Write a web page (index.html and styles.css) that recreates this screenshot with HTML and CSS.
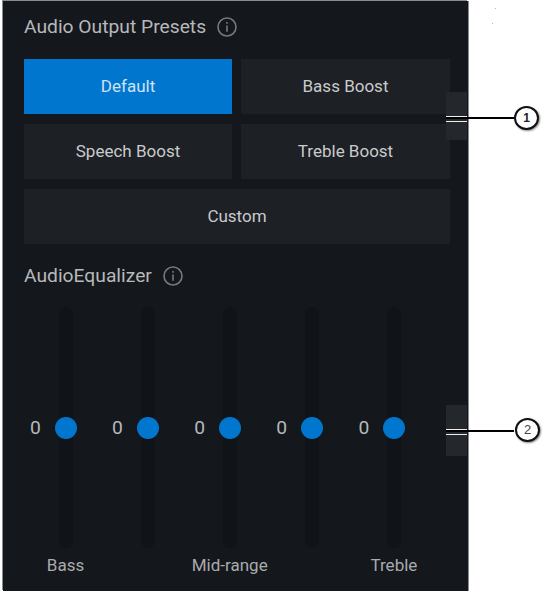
FILE: index.html
```html
<!DOCTYPE html>
<html lang="en">
<head>
<meta charset="utf-8">
<title>Audio</title>
<link rel="stylesheet" href="styles.css">
</head>
<body>
<main class="panel">
  <section class="section">
    <h2 class="heading">Audio Output Presets
      <svg class="info" viewBox="0 0 20 20" aria-hidden="true"><circle cx="10" cy="10" r="9"/><path d="M10 8.4v6.4"/><path d="M10 5v1.8"/></svg>
    </h2>
    <div class="presets">
      <button class="preset active">Default</button>
      <button class="preset">Bass Boost</button>
      <button class="preset">Speech Boost</button>
      <button class="preset">Treble Boost</button>
      <button class="preset wide">Custom</button>
    </div>
  </section>
  <section class="eq-section">
    <h2 class="heading">AudioEqualizer
      <svg class="info" viewBox="0 0 20 20" aria-hidden="true"><circle cx="10" cy="10" r="9"/><path d="M10 8.4v6.4"/><path d="M10 5v1.8"/></svg>
    </h2>
    <div class="bands">
      <div class="band"><span class="value">0</span><div class="track"><span class="thumb"></span></div><span class="label">Bass</span></div>
      <div class="band"><span class="value">0</span><div class="track"><span class="thumb"></span></div><span class="label"></span></div>
      <div class="band"><span class="value">0</span><div class="track"><span class="thumb"></span></div><span class="label">Mid-range</span></div>
      <div class="band"><span class="value">0</span><div class="track"><span class="thumb"></span></div><span class="label"></span></div>
      <div class="band"><span class="value">0</span><div class="track"><span class="thumb"></span></div><span class="label">Treble</span></div>
    </div>
  </section>
</main>

<div class="tab tab-one"></div>
<div class="tab tab-two"></div>
<div class="leader leader-one"></div>
<div class="leader leader-two"></div>
<div class="callout callout-one">1</div>
<div class="callout callout-two">2</div>
<span class="speck speck-one"></span>
<span class="speck speck-two"></span>
</body>
</html>
```
FILE: styles.css
```css
* { box-sizing: border-box; }
html, body { margin: 0; height: 100%; background: #fff; overflow: hidden; }
body { position: relative; font-family: Roboto, "Liberation Sans", sans-serif; }

.panel {
  width: 465px;
  height: 590px;
  margin: 1px 0 0 3px;
  padding: 13px 17px 0 21px;
  background: #14171c;
  box-shadow: -1px -1px 0 #8c8c8c, 1px 0 0 #8c8c8c;
}
.heading {
  display: flex;
  align-items: center;
  gap: 11px;
  height: 24px;
  margin: 0;
  font-size: 19.25px;
  font-weight: 400;
  color: #b7b9bb;
}
.info { width: 20px; height: 20px; margin-top: 1px; fill: none; stroke: #77797c; stroke-width: 1.6; }

.presets {
  display: grid;
  grid-template-columns: 208px 209px;
  grid-auto-rows: 55px;
  gap: 10px 9px;
  margin-top: 21px;
}
.preset {
  border: 0;
  padding: 0 0 2px;
  background: #1d2025;
  color: #c9cbcc;
  font: 400 17px Roboto, "Liberation Sans", sans-serif;
}
.preset.active { background: #0076ce; color: #cfe2f3; }
.preset.wide { grid-column: 1 / -1; }

.eq-section { margin-top: 19px; }
.bands {
  display: grid;
  grid-template-columns: repeat(5, 82.1px);
  margin-top: 20px;
}
.band {
  display: grid;
  grid-template-columns: 34.5px 14px 33.6px;
  grid-template-rows: 241px auto;
  align-items: center;
}
.value {
  grid-column: 1;
  grid-row: 1;
  padding-left: 6px;
  font-size: 19.25px;
  color: #b7b9bb;
}
.track {
  grid-column: 2;
  grid-row: 1;
  position: relative;
  height: 241px;
  border-radius: 7px;
  background: #101318;
}
.thumb {
  position: absolute;
  left: -4px;
  top: 110px;
  width: 22px;
  height: 22px;
  border-radius: 50%;
  background: #0076ce;
}
.label {
  grid-column: 1 / -1;
  grid-row: 2;
  justify-self: center;
  margin: 7px 0 0 1px;
  white-space: nowrap;
  font-size: 17px;
  color: #a9abad;
}

.tab { position: absolute; left: 446px; width: 21px; background: #24272c; }
.tab-one { top: 92px; height: 48px; }
.tab-two { top: 405px; height: 51px; }
.leader { position: absolute; left: 446px; width: 68px; height: 2px; background: #000; }
.leader::before {
  content: "";
  position: absolute;
  left: 0;
  top: -1px;
  width: 21px;
  height: 4px;
  border-top: 1px solid #eee;
  border-bottom: 1px solid #eee;
}
.leader-one { top: 117px; }
.leader-two { top: 430px; }
.callout {
  position: absolute;
  width: 25px;
  border: 2px solid #111;
  border-radius: 50%;
  background: #fff;
  box-shadow: 1px 1px 2px #888;
  text-align: center;
}
.callout-one { left: 514px; top: 106px; height: 24px; color: #222; font: 700 12px/20px "Liberation Sans", sans-serif; }
.callout-two { left: 515px; top: 418px; height: 24px; color: #444; font: 400 13px/20px "Liberation Sans", sans-serif; }
.speck { position: absolute; width: 1px; height: 1px; background: #bbb; }
.speck-one { left: 495px; top: 8px; }
.speck-two { left: 492px; top: 23px; }
```
